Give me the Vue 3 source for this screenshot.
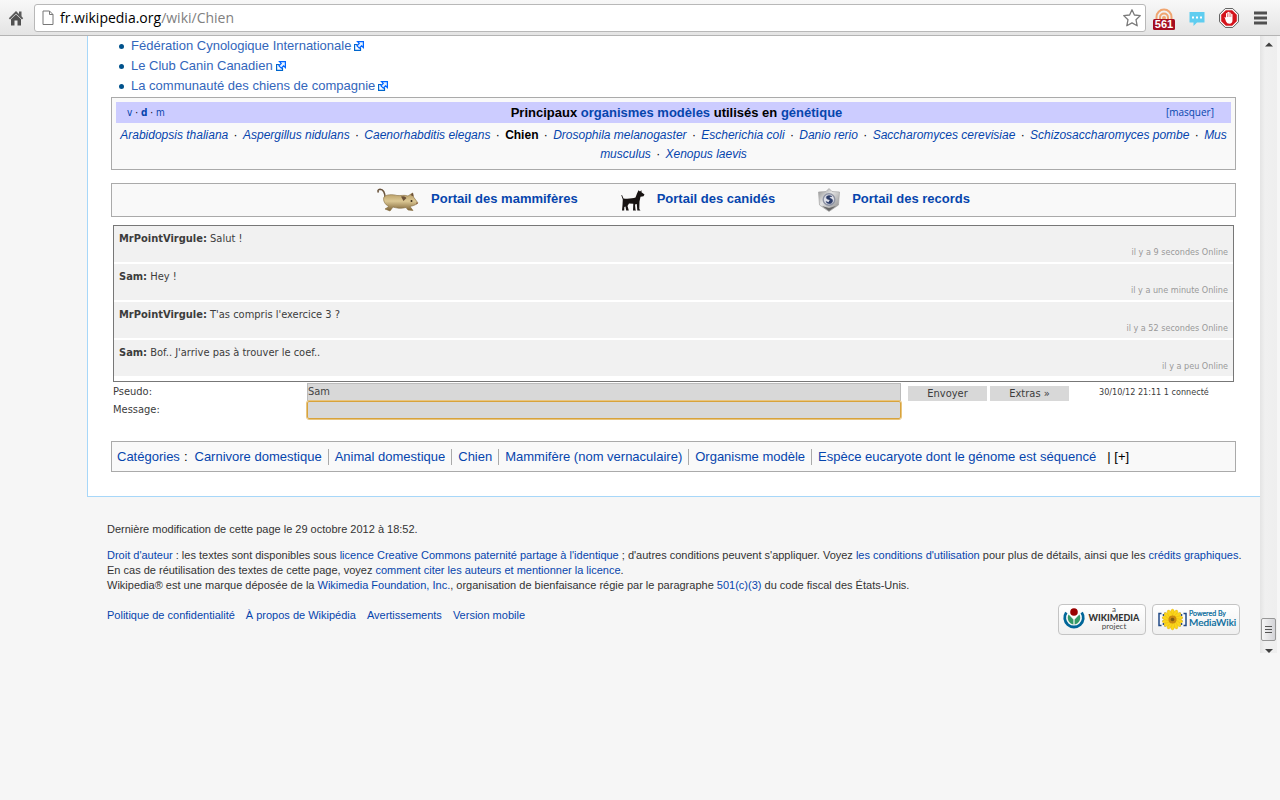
<script setup>
import { ref } from 'vue'

const path = ref('/wiki/Chien')
const pseudo = ref('Sam')
const message = ref('')

const links = [
  'Fédération Cynologique Internationale',
  'Le Club Canin Canadien',
  'La communauté des chiens de compagnie',
]

const organisms = [
  'Arabidopsis thaliana',
  'Aspergillus nidulans',
  'Caenorhabditis elegans',
  'Chien',
  'Drosophila melanogaster',
  'Escherichia coli',
  'Danio rerio',
  'Saccharomyces cerevisiae',
  'Schizosaccharomyces pombe',
]

const messages = [
  { who: 'MrPointVirgule', text: 'Salut !', when: 'il y a 9 secondes Online' },
  { who: 'Sam', text: 'Hey !', when: 'il y a une minute Online' },
  { who: 'MrPointVirgule', text: "T'as compris l'exercice 3 ?", when: 'il y a 52 secondes Online' },
  { who: 'Sam', text: "Bof.. J'arrive pas à trouver le coef..", when: 'il y a peu Online' },
]

const categories = [
  'Carnivore domestique',
  'Animal domestique',
  'Chien',
  'Mammifère (nom vernaculaire)',
  'Organisme modèle',
  'Espèce eucaryote dont le génome est séquencé',
]

const footerLinks = ['Politique de confidentialité', 'À propos de Wikipédia', 'Avertissements', 'Version mobile']
const petals = Array.from({ length: 14 }, (_, i) => (i * 360) / 14)
</script>

<template>
  <div class="browser">
    <header class="toolbar">
      <button class="tool home" type="button" aria-label="Accueil">
        <svg width="16" height="16" viewBox="0 0 16 16">
          <path d="M8 1 L0.800 8.200 L2 9.400 L8 3.800 L14 9.400 L15.200 8.200 L13.500 6.300 V1.500 H11 V4 Z" fill="#5a5a5a" />
          <path d="M8 4.600 L3 9.300 V15.500 H6.500 V10.500 H9.500 V15.500 H13 V9.300 Z" fill="#505050" />
        </svg>
      </button>
      <div class="omnibox">
        <svg class="page-icon" width="12" height="16" viewBox="0 0 12 16">
          <path d="M1 1 H7.500 L11 4.500 V14.500 H1 Z" fill="#fff" stroke="#777" />
          <path d="M7.500 1 V4.500 H11" fill="none" stroke="#777" />
        </svg>
        <label class="address">
          <span>fr.wikipedia.org</span>
          <input v-model="path" type="text" />
        </label>
        <button class="tool" type="button" aria-label="Ajouter aux favoris">
          <svg width="20" height="20" viewBox="0 0 20 20">
            <path d="M10 1.800 L12.400 7 L18.300 7.600 L14 11.700 L15.200 17.800 L10 14.900 L4.800 17.800 L6 11.700 L1.700 7.600 L7.600 7 Z" fill="#fff" stroke="#7b7b7b" stroke-width="1.300" stroke-linejoin="round" />
          </svg>
        </button>
      </div>
      <div class="extensions">
        <button class="tool" type="button" aria-label="Flux, 561 nouveaux">
          <svg width="22" height="24" viewBox="0 0 22 24">
            <g fill="none" stroke="#f0a570" stroke-width="2">
              <path d="M3.500 14 V11 A7.500 7.500 0 0 1 18.500 11 V14" />
              <path d="M7 14 V11.500 A4 4 0 0 1 15 11.500 V14" />
            </g>
            <circle cx="11" cy="12" r="2" fill="#f0a570" />
            <rect x="0" y="13" width="22" height="11" rx="1.500" fill="#a50d20" />
            <text x="11" y="22.300" text-anchor="middle" font-size="11" font-weight="bold" fill="#fff">561</text>
          </svg>
        </button>
        <button class="tool" type="button" aria-label="Discussion">
          <svg width="16" height="16" viewBox="0 0 16 16">
            <path d="M0.500 2 H15.500 V12.500 H8 L4.500 16 V12.500 H0.500 Z" fill="#5fcdf0" />
            <path d="M3 6.500 h2 v2 h-2z M7 6.500 h2 v2 h-2z M11 6.500 h2 v2 h-2z" fill="#fff" />
          </svg>
        </button>
        <button class="tool" type="button" aria-label="Bloqueur">
          <svg width="20" height="20" viewBox="0 0 20 20">
            <path d="M6.200 0.600 H13.800 L19.400 6.200 V13.800 L13.800 19.400 H6.200 L0.600 13.800 V6.200 Z" fill="#fff" stroke="#555" />
            <path d="M6.800 2.200 H13.200 L17.800 6.800 V13.200 L13.200 17.800 H6.800 L2.200 13.200 V6.800 Z" fill="#d4131b" />
            <path d="M5.500 9 Q6.500 8.500 7 10 V5.500 Q7.700 4.500 8.400 5.500 V4.300 Q9.200 3.400 10 4.300 V4.800 Q10.900 3.900 11.700 4.900 V6 Q12.700 5.200 13.500 6.300 V12 Q13.500 15.800 10.400 15.800 Q8 15.800 7 13.500 Z" fill="#fff" />
            <path d="M8.500 5.500 V9 M10.100 5 V9 M11.800 6 V9" stroke="#d4131b" stroke-width="0.500" />
          </svg>
        </button>
        <button class="tool menu" type="button" aria-label="Menu">
          <svg width="13" height="14" viewBox="0 0 13 14">
            <path d="M0 0.500 h13 v3 h-13z M0 5.500 h13 v3 h-13z M0 10.500 h13 v3 h-13z" fill="#505050" />
          </svg>
        </button>
      </div>
    </header>

    <div class="viewport">
      <div class="page">
        <main class="content">
          <ul class="links">
            <li v-for="l in links" :key="l">
              <a href="#">{{ l }}</a>
              <svg width="10" height="10" viewBox="0 0 10 10">
                <path d="M3.500 3.500 H0.600 V9.400 H6.500 V6.500" fill="none" stroke="#06c" stroke-width="1.200" />
                <path d="M3.500 0.600 H9.400 V6.500 L7.600 4.800 L5.300 7.200 L2.900 4.800 L5.200 2.400 Z" fill="#e8f2ff" stroke="#06f" stroke-width="1.200" />
              </svg>
            </li>
          </ul>

          <section class="navbox">
            <div class="navbox-title">
              <span class="vdm"><a href="#">v</a> · <a href="#"><b>d</b></a> · <a href="#">m</a></span>
              <h2>Principaux <a href="#">organismes modèles</a> utilisés en <a href="#">génétique</a></h2>
              <span class="toggle">[<a href="#">masquer</a>]</span>
            </div>
            <p>
              <template v-for="o in organisms" :key="o">
                <b v-if="o === 'Chien'">{{ o }}</b><a v-else href="#">{{ o }}</a><span class="dot"> · </span>
              </template><a href="#">Mus<br />musculus</a><span class="dot"> · </span><a href="#">Xenopus laevis</a>
            </p>
          </section>

          <nav class="portals">
            <a href="#">
              <svg width="42" height="24" viewBox="0 0 42 24">
                <defs>
                  <linearGradient id="fur" x1="0" y1="0" x2="0" y2="1">
                    <stop offset="0" stop-color="#b59a63" />
                    <stop offset="0.450" stop-color="#dcc894" />
                    <stop offset="1" stop-color="#7b6134" />
                  </linearGradient>
                </defs>
                <path d="M8 10 C8 5 6 1.500 3 1.300 C1 1.300 0.500 3 1.500 4.500" fill="none" stroke="#69533c" stroke-width="1.500" />
                <path d="M7 9 C9 6.500 15 6 20 7.500 C24 8 27 6.500 31 8 L35.500 5 L36.500 9 L41 15 C38 17.500 35 18 33 18.500 L36 22.500 L31 22 L29 19.500 C24 21 19 20 16 19 L13 23 L8 21 L12 18.500 C8 17 5.500 12 7 9 Z" fill="url(#fur)" stroke="#836a3d" stroke-width="0.600" />
                <path d="M24 8.500 Q28 7.500 29.500 10 L26.500 13 Z M33.500 7 L36 4.800 L36.500 8.500 Z" fill="#6b5138" />
                <circle cx="34.500" cy="13" r="1" fill="#33271a" />
                <path d="M39 14.500 l2 0.500 l-1.500 1.500z" fill="#8a5a44" />
              </svg>
              <span>Portail des mammifères</span>
            </a>
            <a href="#">
              <svg width="24" height="24" viewBox="0 0 24 24">
                <path d="M1 7 L2.500 10.500 C7 11 12 10.500 14.500 9.500 L16 5.500 L17.500 2.300 L19 3.500 L20.500 2.300 L20.500 4.300 L23.500 6.500 L22.500 8.300 L19.500 8.800 L18.500 13.500 L18.300 21 L19.500 22.500 H16.300 L15.800 16 L14 16.500 L14.500 21.500 L15 22.500 H12 L12.300 15.800 L8 15.500 L6.500 18 L7.800 22.500 H5.200 L4.500 18.500 L3.300 19 L3.200 22.500 H1 L1.500 17 L1.800 11.500 L0.300 7.200 Z" fill="#171312" />
              </svg>
              <span>Portail des canidés</span>
            </a>
            <a href="#">
              <svg width="22" height="24" viewBox="0 0 22 24">
                <defs>
                  <linearGradient id="steel" x1="0" y1="0" x2="1" y2="1">
                    <stop offset="0" stop-color="#8c8c8c" />
                    <stop offset="0.400" stop-color="#e4e4e4" />
                    <stop offset="1" stop-color="#858585" />
                  </linearGradient>
                </defs>
                <path d="M11 0.500 L14 3.500 L21.500 4 L20.500 17 L11 23.500 L1.500 17 L0.500 4 L8 3.500 Z" fill="url(#steel)" stroke="#a5a5a5" stroke-width="0.700" />
                <path d="M4 18 L11 23 L18 18 L11 20 Z" fill="#686868" />
                <circle cx="11" cy="11.500" r="5.800" fill="#dfe1ea" stroke="#8e93a3" stroke-width="1.400" />
                <path d="M14 8.500 C11 6.500 7.500 8 8.500 10.300 C9.500 12 12 11 12 13 C12 14.500 9.500 14.500 8 13.500 C9.500 17 15 16 14.700 12.500 C14.500 10.500 11.500 10.500 11.500 9.500 C11.800 8.500 13 8.700 14 8.500" fill="#2c3c68" stroke="#2c3c68" stroke-width="0.500" />
              </svg>
              <span>Portail des records</span>
            </a>
          </nav>

          <section class="chat">
            <div class="log">
              <article v-for="m in messages" :key="m.when">
                <p><b>{{ m.who }}:</b> {{ m.text }}</p>
                <time>{{ m.when }}</time>
              </article>
            </div>
            <form class="chat-form" @submit.prevent>
              <div class="fields">
                <label for="pseudo">Pseudo:</label>
                <input id="pseudo" v-model="pseudo" type="text" />
                <label for="message">Message:</label>
                <input id="message" v-model="message" class="active" type="text" />
              </div>
              <div class="actions">
                <button type="submit">Envoyer</button>
                <button type="button">Extras »</button>
                <span>30/10/12 21:11 1 connecté</span>
              </div>
            </form>
          </section>

          <nav class="categories">
            <a href="#">Catégories</a><span class="colon">:</span>
            <ul>
              <li v-for="c in categories" :key="c"><a href="#">{{ c }}</a></li>
            </ul>
            <span class="more">| [<a href="#">+</a>]</span>
          </nav>
        </main>

        <footer class="footer">
          <p>Dernière modification de cette page le 29 octobre 2012 à 18:52.</p>
          <p class="legal">
            <a href="#">Droit d'auteur</a> : les textes sont disponibles sous <a href="#">licence Creative Commons paternité partage à l'identique</a> ; d'autres conditions peuvent s'appliquer. Voyez <a href="#">les conditions d'utilisation</a> pour plus de détails, ainsi que les <a href="#">crédits graphiques</a>.<br />
            En cas de réutilisation des textes de cette page, voyez <a href="#">comment citer les auteurs et mentionner la licence</a>.<br />
            Wikipedia® est une marque déposée de la <a href="#">Wikimedia Foundation, Inc.</a>, organisation de bienfaisance régie par le paragraphe <a href="#">501(c)(3)</a> du code fiscal des États-Unis.
          </p>
          <div class="footer-row">
            <nav><a v-for="f in footerLinks" :key="f" href="#">{{ f }}</a></nav>
            <div class="badges">
              <a class="badge" href="#" aria-label="a Wikimedia project">
                <svg width="86" height="29" viewBox="0 0 86 29">
                  <path d="M7.300 7.500 A9.300 9.300 0 1 0 22.700 7.500" fill="none" stroke="#069" stroke-width="2.800" />
                  <path d="M9.600 9.500 A6.800 6.800 0 0 0 14.400 19.500 V14.500 Z M20.400 9.500 A6.800 6.800 0 0 1 15.600 19.500 V14.500 Z" fill="#396" />
                  <circle cx="15" cy="7" r="3.800" fill="#900" />
                  <g class="lato" fill="#4a4a4a" text-anchor="middle">
                    <text x="55" y="7" font-size="8">a</text>
                    <text x="55" y="16" font-size="9" font-weight="900" fill="#333">WIKIMEDIA</text>
                    <text x="55" y="24" font-size="8">project</text>
                  </g>
                </svg>
              </a>
              <a class="badge" href="#" aria-label="Powered By MediaWiki">
                <svg width="86" height="29" viewBox="0 0 86 29">
                  <g fill="none" stroke="#224a86" stroke-width="1.500">
                    <path d="M8.500 8.500 H6 V20.500 H8.500" />
                    <path d="M30.500 8.500 H33 V20.500 H30.500" />
                    <path d="M13 8.500 H10.500 V20.500 H13 M26 8.500 H28.500 V20.500 H26" stroke-dasharray="2 1" />
                  </g>
                  <ellipse v-for="a in petals" :key="a" cx="19.500" cy="8.500" rx="2" ry="4.500" fill="#fbd51a" stroke="#dca60d" stroke-width="0.300" :transform="`rotate(${a} 19.500 14.500)`" />
                  <circle cx="19.500" cy="14.500" r="4" fill="#c98912" />
                  <circle cx="19.500" cy="14.500" r="1.800" fill="#7f5a12" />
                  <g class="lato" fill="#069" stroke="#069" stroke-width="0.200">
                    <text x="36" y="11" font-size="7">Powered By</text>
                    <text x="36" y="21" font-size="10">MediaWiki</text>
                  </g>
                </svg>
              </a>
            </div>
          </div>
        </footer>
      </div>

      <div class="scrollbar" aria-hidden="true">
        <svg width="8" height="5" viewBox="0 0 8 5"><path d="M0 4.500 L4 0.500 L8 4.500 Z" fill="#404040" /></svg>
        <div class="track"><div class="thumb"><i /><i /><i /></div></div>
        <svg width="8" height="4" viewBox="0 0 8 4"><path d="M0 0 H8 L4 4 Z" fill="#404040" /></svg>
      </div>
    </div>
  </div>
</template>

<style>
body {
  background: #f6f6f6;
}
</style>

<style scoped>
.browser {
  min-height: 100vh;
  background: #f6f6f6;
  font-family: "Liberation Sans", Arial, sans-serif;
  font-size: 13px;
  color: #000;
}
p, h2, ul {
  margin: 0;
  padding: 0;
}
ul {
  list-style: none;
}
a {
  color: #0645ad;
  text-decoration: none;
}
svg {
  display: block;
  flex: none;
}

/* Browser toolbar */
.toolbar {
  display: flex;
  align-items: center;
  box-sizing: border-box;
  height: 36px;
  padding: 0 13px 0 8px;
  background: linear-gradient(#f8f8f8, #e4e4e4);
  border-bottom: 1px solid #b4b4b4;
}
.tool {
  padding: 0;
  border: 0;
  background: none;
}
.omnibox {
  display: flex;
  flex: 1;
  align-items: center;
  box-sizing: border-box;
  height: 28px;
  margin-left: 10px;
  padding: 0 3px 0 7px;
  background: #fff;
  border: 1px solid #b8b8b8;
  border-radius: 3px;
}
.address {
  display: flex;
  flex: 1;
  margin-left: 6px;
  font: 14px/24px "Open Sans", "Noto Sans", sans-serif;
}
.address input {
  flex: 1;
  min-width: 0;
  padding: 0;
  border: 0;
  outline: 0;
  background: none;
  font: inherit;
  color: #808080;
}
.extensions {
  display: flex;
  align-items: center;
  gap: 14px;
  margin-left: 7px;
}
.menu {
  margin-left: 1px;
}

/* Viewport */
.viewport {
  display: flex;
  margin-right: 3px;
}
.page {
  flex: 1;
  min-width: 0;
}
.content {
  margin-left: 87px;
  padding: 0 24px 24px 23px;
  background: #fff;
  border-left: 1px solid #a7d7f9;
  border-bottom: 1px solid #a7d7f9;
}
.links {
  padding: 0 0 1px 8px;
  line-height: 20px;
}
.links li {
  display: flex;
  align-items: center;
  gap: 3px;
}
.links li::before {
  content: "";
  width: 5px;
  height: 5px;
  margin-right: 4px;
  border-radius: 50%;
  background: #00528c;
}
.links a {
  color: #36b;
}

.navbox,
.portals,
.categories {
  background: #f9f9f9;
  border: 1px solid #aaa;
}
.navbox {
  padding: 4px 4px 5px;
}
.navbox-title {
  display: grid;
  grid-template-columns: 112px 1fr 100px;
  align-items: center;
  padding: 0 17px 0 11px;
  background: #ccf;
  line-height: 21px;
}
.navbox-title h2 {
  text-align: center;
  font-size: 13px;
}
.vdm {
  font: 10px/21px "DejaVu Sans Condensed", "DejaVu Sans", sans-serif;
}
.toggle {
  text-align: right;
  font: 10px/21px "Open Sans", sans-serif;
  color: #0645ad;
}
.navbox p {
  padding-top: 3px;
  text-align: center;
  font-size: 12px;
  line-height: 19px;
}
.navbox p a {
  font-style: italic;
}
.dot {
  margin: 0 2px;
}
.portals {
  display: flex;
  justify-content: center;
  gap: 43px;
  margin-top: 13px;
  padding: 4px 0;
}
.portals a {
  display: flex;
  gap: 12px;
  font-weight: 700;
  line-height: 22px;
}

/* Chat */
.chat {
  margin: 8px 2px 0;
  font: 11px/14px "DejaVu Sans Condensed", "DejaVu Sans", sans-serif;
  color: #3c3c3c;
}
.log {
  padding-bottom: 3px;
  border: 1px solid #777;
}
.log article {
  padding: 6px 5px 3px;
  margin-bottom: 2px;
  background: #f1f1f1;
}
.log time {
  display: block;
  text-align: right;
  font-size: 9px;
  line-height: 13px;
  color: #999;
}
.chat-form {
  display: grid;
  grid-template-columns: 788fr 333fr;
  margin-top: 1px;
}
.fields {
  display: grid;
  grid-template-columns: 194fr 594fr;
  align-items: center;
  line-height: 18px;
}
.fields input {
  box-sizing: border-box;
  width: 100%;
  height: 18px;
  padding: 0;
  border: 1px solid #bbb;
  background: #d8d8d8;
  font: inherit;
  color: #444;
}
.fields .active {
  border-color: #d8a33c;
  border-radius: 2px;
  outline: 1px solid #e8c57f;
  outline-offset: 0;
}
.actions {
  display: flex;
  align-items: flex-start;
  gap: 3px;
  padding: 3px 0 0 7px;
}
.actions button {
  width: 79px;
  height: 15px;
  padding: 0;
  border: 0;
  background: #d8d8d8;
  font: inherit;
  color: #3c3c3c;
}
.actions span {
  margin-left: 27px;
  font-size: 9px;
  line-height: 12px;
  white-space: nowrap;
}

/* Categories */
.categories {
  display: flex;
  align-items: center;
  margin-top: 22px;
  padding: 6px 5px;
  line-height: 17px;
}
.colon {
  margin-left: 4px;
}
.categories ul {
  display: flex;
  margin-left: 1px;
}
.categories li {
  padding: 0 6px;
  line-height: 16px;
}
.categories li + li {
  border-left: 1px solid #aaa;
}
.more {
  margin-left: 5px;
}
.more a {
  color: #000;
}

/* Footer */
.footer {
  padding: 25px 0 18px 107px;
  font-size: 11px;
  line-height: 15px;
  color: #333;
}
.legal {
  margin-top: 11px;
}
.footer-row {
  display: flex;
  justify-content: space-between;
  margin-top: 11px;
  padding-right: 20px;
}
.footer-row nav {
  display: flex;
  gap: 11px;
  padding-top: 4px;
}
.badges {
  display: flex;
  gap: 6px;
}
.badge {
  border: 1px solid #c4c4c4;
  border-radius: 4px;
  background: linear-gradient(#fff, #f0f0f0);
}
.lato {
  font-family: Lato, sans-serif;
}

/* Scrollbar */
.scrollbar {
  display: flex;
  flex-direction: column;
  align-items: center;
  box-sizing: border-box;
  width: 17px;
  padding-top: 6px;
  background: linear-gradient(90deg, #e4e4e4, #f0f0f0 30%, #eee);
}
.track {
  display: flex;
  flex: 1;
  flex-direction: column;
  justify-content: flex-end;
  padding-bottom: 8px;
}
.thumb {
  display: flex;
  flex-direction: column;
  align-items: center;
  justify-content: center;
  gap: 2px;
  box-sizing: border-box;
  width: 15px;
  height: 23px;
  border: 1px solid #979797;
  border-radius: 2px;
  background: linear-gradient(90deg, #f6f6f6, #d3d3d7);
}
.thumb i {
  width: 7px;
  height: 1px;
  background: #555;
}
</style>
